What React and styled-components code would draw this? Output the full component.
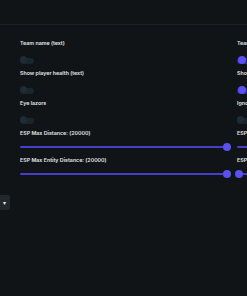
import React from 'react'
import styled, { createGlobalStyle } from 'styled-components'

const Global = createGlobalStyle`
html, body {
  margin: 0;
  padding: 0;
  background: #101417;
  overflow: hidden;
}
body {
  font-family: Inter, "Noto Sans", "Liberation Sans", sans-serif;
}
`

const Page = styled.div`
width: 247px;
height: 296px;
background: #101417;
overflow: hidden;
`

const Header = styled.div`
height: 25px;
border-bottom: 1px solid #1a2026;
box-sizing: border-box;
`

const Columns = styled.div`
display: flex;
margin-left: -197px;
padding-top: 14px;
`

const Column = styled.div`
flex: 0 0 207px;
margin-right: 10px;
display: flex;
flex-direction: column;
`

const Body = styled.div`
display: flex;
flex-direction: column;
visibility: ${p => (p.$hidden ? 'hidden' : 'visible')};
`

const Label = styled.div`
color: #e4e6e8;
font-size: 5.3px;
font-weight: 600;
line-height: 8px;
height: 8px;
white-space: nowrap;
`

const SwitchWrap = styled.div`
position: relative;
width: 14px;
height: 7px;
margin: 10px 0 5px;
`

const Track = styled.div`
width: 14px;
height: 6px;
margin-top: 0.5px;
border-radius: 3px;
background: ${p => (p.$on ? '#2b2870' : '#1a262e')};
`

const Thumb = styled.div`
position: absolute;
top: -1px;
left: ${p => (p.$on ? '1px' : '0px')};
width: ${p => (p.$on ? '8px' : '7px')};
height: ${p => (p.$on ? '8px' : '7px')};
border-radius: 50%;
background: ${p => (p.$on ? '#5a4ff2' : '#1f2c35')};
`

const SliderWrap = styled.div`
position: relative;
height: 8px;
margin: 6px 0 5px;
display: flex;
align-items: center;
`

const SliderTrack = styled.div`
width: 100%;
height: 2px;
background: #473fc9;
border-radius: 1px;
`

const SliderThumb = styled.div`
position: absolute;
top: 0;
width: 8px;
height: 8px;
margin-left: -4px;
border-radius: 50%;
background: #5a50ef;
`

const Select = styled.div`
margin-top: 12px;
height: 15px;
background: #22272c;
border-radius: 2px;
display: flex;
align-items: center;
justify-content: flex-end;
padding-right: 4px;
color: #e8e8e8;
font-size: 6px;
`

function Switch({ on }) {
  return (
    <SwitchWrap>
      <Track $on={on} />
      <Thumb $on={on} />
    </SwitchWrap>
  )
}

function Slider({ value }) {
  return (
    <SliderWrap>
      <SliderTrack />
      <SliderThumb style={{ left: `${value}%` }} />
    </SliderWrap>
  )
}

const columns = [
  {
    hidden: true,
    rows: [
      { label: 'Name (text)', on: false },
      { label: 'Show health (text)', on: false },
      { label: 'Eye lazors', on: false },
    ],
    sliders: [0, 0],
    select: true,
  },
  {
    rows: [
      { label: 'Team name (text)', on: false },
      { label: 'Show player health (text)', on: false },
      { label: 'Eye lazors', on: false },
    ],
    sliders: [100, 100],
  },
  {
    rows: [
      { label: 'Team name (text)', on: true },
      { label: 'Show player health (text)', on: true },
      { label: 'Ignore team', on: false },
    ],
    sliders: [100, 1],
  },
]

export default function App() {
  return (
    <Page>
      <Global />
      <Header />
      <Columns>
        {columns.map((col, i) => (
          <Column key={i}>
            <Body $hidden={col.hidden}>
              {col.rows.map(r => (
                <React.Fragment key={r.label}>
                  <Label>{r.label}</Label>
                  <Switch on={r.on} />
                </React.Fragment>
              ))}
              <Label>ESP Max Distance: (20000)</Label>
              <Slider value={col.sliders[0]} />
              <Label>ESP Max Entity Distance: (20000)</Label>
              <Slider value={col.sliders[1]} />
            </Body>
            {col.select && <Select>▾</Select>}
          </Column>
        ))}
      </Columns>
    </Page>
  )
}
